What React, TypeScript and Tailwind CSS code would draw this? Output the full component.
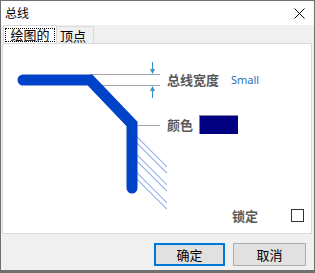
import React from 'react';

const font = { fontFamily: '"Noto Sans CJK SC", "Noto Sans", sans-serif' };

const hatches = [134, 152, 170];

function Drawing() {
  return (
    <svg width="164" height="188" viewBox="3 44 164 188" className="shrink-0">
      {hatches.map((y) => (
        <g key={y}>
          <line x1="131" y1={y} x2="168" y2={y + 37} stroke="#8aaae4" strokeWidth="5.4" strokeLinecap="round" />
          <line x1="131" y1={y} x2="168" y2={y + 37} stroke="#ffffff" strokeWidth="3.6" strokeLinecap="round" />
        </g>
      ))}
      <line x1="90" y1="74.5" x2="160" y2="74.5" stroke="#a8a8a8" strokeWidth="1" />
      <line x1="100" y1="85.5" x2="160" y2="85.5" stroke="#a8a8a8" strokeWidth="1" />
      <line x1="137" y1="125.5" x2="160" y2="125.5" stroke="#a8a8a8" strokeWidth="1" />
      <path
        d="M23 80 H90 L132 124 V188"
        fill="none"
        stroke="#0043c8"
        strokeWidth="11"
        strokeLinecap="round"
        strokeLinejoin="miter"
      />
      {/* width arrows */}
      <line x1="152.5" y1="62" x2="152.5" y2="70" stroke="#3a8fc8" strokeWidth="1" />
      <polygon points="150,69 155,69 152.5,74" fill="#3a8fc8" />
      <line x1="152.5" y1="90" x2="152.5" y2="98" stroke="#3a8fc8" strokeWidth="1" />
      <polygon points="150,91 155,91 152.5,86" fill="#3a8fc8" />
    </svg>
  );
}

export default function App() {
  return (
    <div
      className="w-[315px] h-[273px] bg-[#f0f0f0] border border-b-[3px] border-[#707070] flex flex-col text-black"
      style={font}
    >
      <div className="h-[24px] bg-white flex items-center justify-between pl-[4px] pr-[9px]">
        <span className="text-[12px] leading-none">总线</span>
        <svg width="11" height="11" viewBox="0 0 11 11">
          <path d="M0.5 0.5 L10.5 10.5 M10.5 0.5 L0.5 10.5" stroke="#000" strokeWidth="1" />
        </svg>
      </div>

      <div className="h-[18px] flex items-end pl-[2px]">
        <div className="w-[54px] h-[18px] bg-white border border-b-0 border-[#d9d9d9] flex items-center justify-center">
          <span className="border border-dotted border-black px-[4px] h-[14px] flex items-center text-[13px] leading-none">
            绘图的
          </span>
        </div>
        <div className="w-[37px] h-[17px] bg-[#f0f0f0] border border-l-0 border-b-0 border-[#d9d9d9] flex items-center pl-[3px] text-[13px] leading-none">
          顶点
        </div>
      </div>

      <div className="h-[191px] mx-[1px] mr-[2px] bg-white border border-[#dadada] flex">
        <Drawing />
        <div className="flex flex-col text-[#5a5a5a] font-bold">
          <div className="mt-[28px] h-[14px] flex items-center">
            <span className="text-[13px] leading-none">总线宽度</span>
            <span
              className="ml-[12px] text-[11px] leading-none text-[#1f6fb4] font-normal"
              style={{ fontFamily: '"Noto Sans", sans-serif' }}
            >
              Small
            </span>
          </div>
          <div className="mt-[29px] h-[19px] flex items-center">
            <span className="text-[13px] leading-none">颜色</span>
            <div className="ml-[6px] w-[39px] h-[19px] bg-[#000080] border-t border-l border-[#8080a0]" />
          </div>
          <div className="mt-[75px] h-[13px] flex items-center">
            <span className="ml-[65px] text-[13px] leading-none">锁定</span>
            <div className="ml-[33px] w-[13px] h-[13px] border border-[#333333] bg-white" />
          </div>
        </div>
      </div>

      <div className="flex justify-end gap-[8px] pt-[9px] pr-[8px]">
        <button className="w-[71px] h-[23px] bg-[#e1e1e1] border-2 border-[#0078d7] text-[13px] leading-none flex items-center justify-center">
          确定
        </button>
        <button className="w-[73px] h-[23px] bg-[#e1e1e1] border border-[#adadad] text-[13px] leading-none flex items-center justify-center">
          取消
        </button>
      </div>
    </div>
  );
}
